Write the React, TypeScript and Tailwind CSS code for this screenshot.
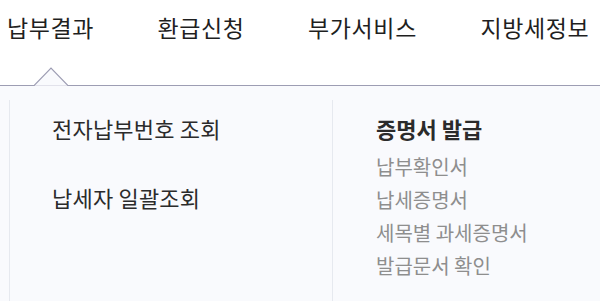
import React from "react";

const font = { fontFamily: '"Noto Sans CJK KR", "Noto Sans", sans-serif' };

const navItems = ["납부결과", "환급신청", "부가서비스", "지방세정보"];
const certItems = ["납부확인서", "납세증명서", "세목별 과세증명서", "발급문서 확인"];

export default function App() {
  return (
    <div className="w-[600px] h-[301px] overflow-hidden bg-white" style={font}>
      <div className="relative h-[86px] border-b border-[#9d9db3]">
        <ul className="flex gap-[63.5px] pl-[7px] pt-[11px] text-[23px] leading-[32px] tracking-[0.6px] text-[#1f1f1f]">
          {navItems.map((t) => (
            <li key={t} className="whitespace-nowrap">{t}</li>
          ))}
        </ul>
        <svg className="absolute left-[34px] top-[67px]" width="34" height="20" viewBox="0 0 34 20">
          <path d="M0 18.5 L17 1 L34 18.5" fill="#f9fafd" stroke="#9d9db3" strokeWidth="1.2" />
          <rect x="1" y="18.5" width="32" height="2" fill="#f9fafd" />
        </svg>
      </div>
      <div className="flex h-[215px] bg-[#f9fafd] pt-[14px]">
        <div className="ml-[9px] w-[323px] border-l border-[#e6e9ef] pl-[42px] pt-[14px] text-[22px] leading-[28px] tracking-[0.2px] text-[#2b2b2b]">
          <p>전자납부번호 조회</p>
          <p className="mt-[41px]">납세자 일괄조회</p>
        </div>
        <div className="flex-1 border-l border-[#e6e9ef] pl-[43px] pt-[14px]">
          <p className="text-[22px] font-bold leading-[28px] text-[#2b2b2b]">증명서 발급</p>
          <ul className="mt-[8px] text-[20px] leading-[33px] text-[#8e8e8e]">
            {certItems.map((t) => (
              <li key={t}>{t}</li>
            ))}
          </ul>
        </div>
      </div>
    </div>
  );
}
